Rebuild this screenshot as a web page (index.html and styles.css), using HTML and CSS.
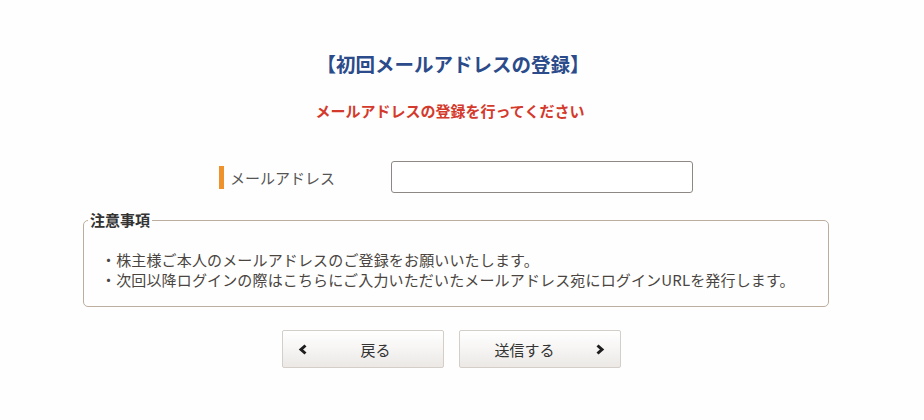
FILE: index.html
```html
<!DOCTYPE html>
<html lang="ja">
<head>
    <meta charset="UTF-8">
    <meta name="viewport" content="width=device-width, initial-scale=1.0">
    <title>初回メールアドレスの登録</title>
    <link rel="stylesheet" href="styles.css">
</head>
<body>
    <div class="container">
        <h1 class="page-title">【初回メールアドレスの登録】</h1>
        <p class="lead">メールアドレスの登録を行ってください</p>

        <form id="mailForm">
            <div class="form-row">
                <label for="mail" class="form-label">メールアドレス</label>
                <input type="email" id="mail" name="mail" class="form-input">
            </div>

            <fieldset class="notice">
                <legend>注意事項</legend>
                <p>・株主様ご本人のメールアドレスのご登録をお願いいたします。</p>
                <p>・次回以降ログインの際はこちらにご入力いただいたメールアドレス宛にログインURLを発行します。</p>
            </fieldset>

            <div class="buttons">
                <button type="button" class="btn btn-back">
                    <svg class="chev" width="10" height="11" viewBox="0 0 10 11"><polyline points="7.5,1.5 3,5.5 7.5,9.5" fill="none" stroke="#1e1e1e" stroke-width="3"/></svg>
                    <span class="btn-text">戻る</span>
                </button>
                <button type="submit" class="btn btn-send">
                    <span class="btn-text">送信する</span>
                    <svg class="chev" width="10" height="11" viewBox="0 0 10 11"><polyline points="2.5,1.5 7,5.5 2.5,9.5" fill="none" stroke="#1e1e1e" stroke-width="3"/></svg>
                </button>
            </div>
        </form>
    </div>
</body>
</html>
```

FILE: styles.css
```css
body {
    margin: 0;
    background-color: #fefefe;
    font-family: "Noto Sans CJK JP", "Noto Sans", sans-serif;
    color: #444;
}

.container {
    width: 746px;
    margin-left: 83px;
    padding-top: 50px;
}

.page-title {
    margin: 0;
    padding-right: 6px;
    font-size: 19.5px;
    line-height: 28px;
    font-weight: 700;
    color: #2b4b8a;
    text-align: center;
}

.lead {
    margin: 22px 0 0;
    padding-right: 12px;
    font-size: 15px;
    line-height: 22px;
    font-weight: 700;
    color: #d43a2c;
    text-align: center;
}

.form-row {
    display: flex;
    justify-content: center;
    align-items: center;
    margin-top: 39px;
}

.form-label {
    width: 160px;
    margin-right: 12px;
    padding-left: 6px;
    border-left: 5px solid #f0922b;
    font-size: 15px;
    line-height: 23px;
    color: #555;
    box-sizing: border-box;
}

.form-input {
    width: 302px;
    height: 32px;
    border: 1px solid #8e8884;
    border-radius: 3px;
    background: #fff;
    box-sizing: border-box;
    padding: 4px 8px;
    font-size: 15px;
}

.form-input:focus {
    outline: none;
    border-color: #666;
}

.notice {
    margin: 18px 0 0;
    padding: 21px 17px 16px;
    border: 1px solid #bcae9f;
    border-radius: 5px;
}

.notice legend {
    margin-left: -13px;
    padding: 0 2px;
    font-size: 15px;
    line-height: 18px;
    font-weight: 700;
    color: #333;
}

.notice p {
    margin: 0;
    font-size: 15px;
    line-height: 20px;
    letter-spacing: 0.15px;
    color: #4a4540;
}

.buttons {
    display: flex;
    justify-content: center;
    gap: 15px;
    margin-top: 23px;
    padding-right: 10px;
}

.btn {
    display: flex;
    align-items: center;
    width: 162px;
    height: 38px;
    padding: 0 15px;
    border: 1px solid #d4cec9;
    border-radius: 2px;
    background: linear-gradient(#ffffff, #f7f6f5 45%, #ebe8e5);
    font-family: inherit;
    font-size: 15px;
    color: #333;
    cursor: pointer;
    box-sizing: border-box;
}

.btn:hover {
    background: linear-gradient(#ffffff, #efecea);
}

.btn-text {
    flex: 1;
    text-align: center;
}

.btn-back .btn-text {
    padding-left: 16px;
}

.btn-send .btn-text {
    padding-right: 20px;
}

.chev {
    flex: none;
}
```
